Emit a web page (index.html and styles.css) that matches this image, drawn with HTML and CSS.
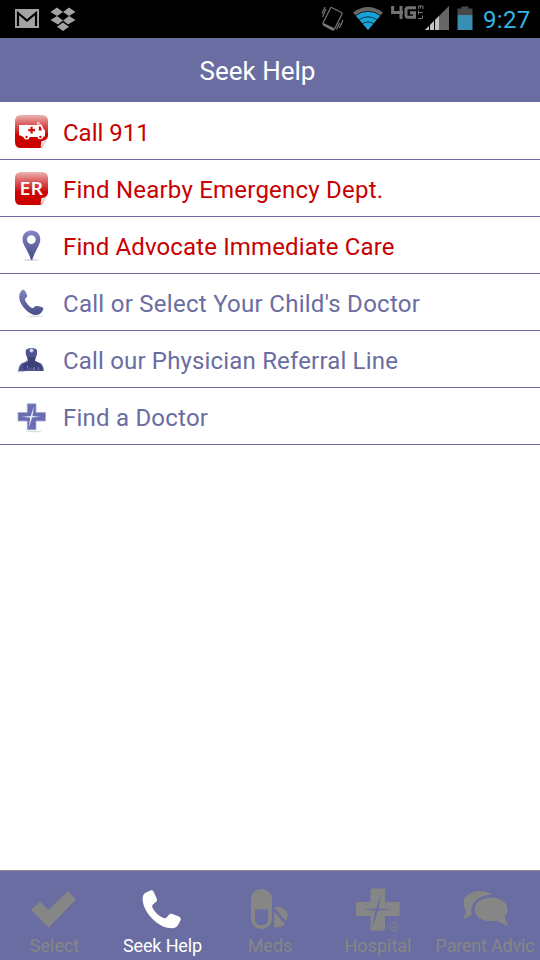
FILE: index.html
```
<!DOCTYPE html>
<html lang="en">
<head>
<meta charset="utf-8">
<title>Seek Help</title>
<link rel="stylesheet" href="styles.css">
</head>
<body>
<div class="screen">
  <div class="status">
    <svg class="notifications" width="80" height="38" viewBox="0 0 80 38">
      <path fill="#a3a3a3" d="M15 9h24v19H15z"/>
      <path fill="none" stroke="#000" stroke-width="2.2" d="M18 26V13L27 20.500L36 13V26"/>
      <g fill="#a3a3a3">
        <path d="M57 7.500l6 4.500-6 4-6.500-4zM69 7.500l6.500 4.500-6.500 4-6-4zM57 16l6 4.500-5 4-7.500-4.500zM69 16l6.500 4-7.500 4.500-5-4zM63 22.500l6 4.200-6 4.300-6-4.300z"/>
      </g>
    </svg>
    <svg class="signals" width="160" height="38" viewBox="320 0 160 38">
      <g fill="none" stroke="#777" stroke-width="1.200">
        <path d="M331.500 7.500l10 5q1 .5.500 1.500l-7.500 15q-.5 1-1.500.5l-9.500-5q-1-.5-.5-1.500l7.500-15q.3-.8 1-.5z"/>
        <path d="M322 13.500l3-6.500M322.500 17l3.500-8M339.500 28l3.500-8M336.500 29.500l3-6.500"/>
      </g>
      <path fill="#777" d="M323.500 23l10.500 5-1 3-10-5.500z"/>
      <path fill="#666" d="M353 12.500Q368 1.500 383 12.500L368 30z"/>
      <path fill="#16a5db" d="M356 15.700Q368 7.500 380 15.700L368 30z"/>
      <path fill="none" stroke="#000" stroke-opacity=".7" stroke-width="1" d="M355.500 15.500Q368 7 380.500 15.500M359 19.800Q368 13.800 377 19.800M362.300 23.700Q368 20.300 373.700 23.700"/>
      <path fill="none" stroke="#737373" stroke-width="3" d="M392.600 6v6.500H403M401 6v13M416 7.800h-8q-2 0-2 2v5.500q0 2 2 2h6.500v-4.500h-4.500"/>
      <path fill="none" stroke="#737373" stroke-width="1" d="M418 18.500h4.500v-3M418.500 14.500v-4M418.500 12.500h4.500M418.500 9v-3h4.500v3M420.500 6v2.500"/>
      <path fill="#666" d="M449 6v24h-24z"/>
      <path fill="#c3c3c3" d="M439 16v14h-14z"/>
      <path stroke="#000" stroke-width="1" d="M429.500 24v6M434.500 19v11"/>
      <path fill="#484848" d="M457.500 8.500h4V6.500h7v2h4V15h-15z"/>
      <path fill="#388fb2" d="M457.500 15h15v15h-15z"/>
    </svg>
    <span class="clock">9:27</span>
  </div>
  <header class="title"><h1>Seek Help</h1></header>
  <ul class="list">
    <li class="row urgent">
      <svg width="40" height="40" viewBox="12 112 40 40">
        <defs>
          <linearGradient id="red" x1="0" y1="0" x2="0" y2="1">
            <stop offset="0" stop-color="#edb5b5"/><stop offset=".25" stop-color="#dc6565"/><stop offset=".5" stop-color="#d02525"/><stop offset=".6" stop-color="#cd0303"/><stop offset="1" stop-color="#c90000"/>
          </linearGradient>
        </defs>
        <path fill="url(#red)" d="M21 115h21q6 0 6 6v15q-1 5-7 12H21q-6 0-6-6v-21q0-6 6-6z"/>
        <path fill="#e9e1e1" d="M48 137q-1 5.500-7.500 10.500l1-6.500q4 0 6.500-4z"/>
        <path fill="#fff" d="M19 125h18v-.5h4.500l2 4.500 1.500 1.500v6h-1.500a3.200 3.200 0 0 1-6.200.5h-7.500a3.200 3.200 0 0 1-6.300 0L19 135z"/>
        <path fill="#d20c0c" d="M30.500 126.800h2.200v2.300h2.300v2.100h-2.300v2.300h-2.200v-2.300h-2.300v-2.100h2.300zM38.800 126.500h1.700l1.500 4h-3.200z"/>
        <circle cx="26.500" cy="137" r="1.200" fill="#d20c0c"/><circle cx="40.400" cy="137" r="1.200" fill="#d20c0c"/>
        <path stroke="#fff" stroke-width="1.300" d="M37 123h2.500"/>
      </svg>
      <span class="t1">Call 911</span>
    </li>
    <li class="row urgent">
      <svg width="40" height="40" viewBox="12 112 40 40">
        <path fill="url(#red)" d="M21 115h21q6 0 6 6v15q-1 5-7 12H21q-6 0-6-6v-21q0-6 6-6z"/>
        <text class="er" x="19.500" y="137.800" textLength="23.500" lengthAdjust="spacingAndGlyphs">ER</text>
        <path fill="#e9e1e1" d="M48 137q-1 5.500-7.500 10.500l1-6.500q4 0 6.500-4z"/>
      </svg>
      <span class="t2">Find Nearby Emergency Dept.</span>
    </li>
    <li class="row urgent">
      <svg width="40" height="40" viewBox="12 226 40 40">
        <defs><linearGradient id="blue" x1="0" y1="0" x2="0" y2="1"><stop offset="0" stop-color="#8085c3"/><stop offset="1" stop-color="#484d84"/></linearGradient></defs>
        <ellipse cx="31" cy="260" rx="8" ry="1" fill="#ddd"/>
        <path fill="url(#blue)" fill-rule="evenodd" d="M31.300 230.500c5.500 0 9 3.800 9 8.800 0 6-5.500 12-8 20.500h-1.500c-2-8.500-8.300-14.500-8.300-20.500 0-5 3.500-8.800 8.800-8.800zm0 4.700a4.400 4.400 0 1 0 0 8.800 4.400 4.400 0 0 0 0-8.800z"/>
      </svg>
      <span class="t3">Find Advocate Immediate Care</span>
    </li>
    <li class="row">
      <svg width="40" height="40" viewBox="12 283 40 40">
        <ellipse cx="35" cy="316.300" rx="9" ry=".8" fill="#ddd"/>
        <path fill="url(#blue)" d="M22 290.200c1-.8 2-.5 2.800.5 1.500 2 2.700 4.500 2.200 6-.3 1-2 1.200-2 2.500 0 2.500 5 8.500 7.500 8.800 1.500.2 2-2 3.500-2 2 0 5.500.5 7 1.800.8.700.2 2-.7 3.400-1.800 3-4.300 3.800-7.300 3.700-5.500-.2-14.500-9-15.700-16.200-.5-4 .7-7 2.700-8.500z"/>
      </svg>
      <span class="t4">Call or Select Your Child's Doctor</span>
    </li>
    <li class="row">
      <svg width="40" height="40" viewBox="12 340 40 40">
        <path fill="#c8c8cf" d="M17 372.300l2.500-6.800 5-3 3-3.500 3 11-8 2.300z"/>
        <path fill="#4d5490" d="M25.800 350.500q.7-2.500 5.700-2.500t5.500 2.500v4l-1.300 3.500-.7 3 5.500 2.200q3 2.300 3.300 7.800H18.500q.5-5.500 3.300-7.800l6-2.200-.5-3-1.500-3.500z"/>
        <path fill="#3b427b" d="M28 357h7v4l5 2.500 2 6-4 1-6.500-3-6.500 2.500-3-3 2-3 4-2z"/>
        <circle cx="31.500" cy="350.500" r="1.800" fill="#e3e4f2" stroke="#a1a4c4" stroke-width=".8"/>
        <path fill="none" stroke="#8f95c3" stroke-width=".8" d="M27.500 366v2.500M34 370v-3M38.500 370v-3"/>
      </svg>
      <span class="t5">Call our Physician Referral Line</span>
    </li>
    <li class="row">
      <svg width="40" height="40" viewBox="12 397 40 40">
        <ellipse cx="34" cy="431.500" rx="8" ry=".7" fill="#ddd"/>
        <path fill="#696eb3" stroke="#a4a7d1" stroke-width=".8" d="M27.300 403.800h8.700v8.700h9.500v8.500H36v8.700h-8.700V421h-9.300v-8.500h9.300z"/>
        <path fill="#e6e6f6" d="M34 406l-1.500 10 7.500.7-7.800.8-3.700 11 1.700-10.800-8.500-1 9-.8z"/>
      </svg>
      <span class="t6">Find a Doctor</span>
    </li>
  </ul>
  <nav class="tabs">
    <div class="tab">
      <svg width="108" height="64" viewBox="0 871 108 64"><path fill="currentColor" d="M31 910l9-8.300 8.300 8.300L68 891l8 8.500-27.500 28z"/></svg>
      <span class="l1">Select</span>
    </div>
    <div class="tab active">
      <svg width="108" height="64" viewBox="108 871 108 64"><path fill="currentColor" d="M146 892.500l4.500-2c1.500-.5 2.500 0 3.200 1.500l3 6.500c.6 1.500.3 2.500-.8 3.500l-3 2.500c-1 1-.8 2.500 0 4 2.500 4.500 6 7.500 10.500 9.500 1.500.6 2.500.2 3.500-.8l2-2.500c1-1 2-1.200 3.500-.7l6.500 2.500c1.500.7 2.300 2 1.700 3.500l-2 4c-1.500 3-3.500 4.200-7 4.300-13 .2-29-16-29-29.500 0-3 1-5 3.400-6.300z"/></svg>
      <span class="l2">Seek Help</span>
    </div>
    <div class="tab">
      <svg width="108" height="64" viewBox="216 871 108 64">
        <path fill="currentColor" fill-rule="evenodd" d="M261.500 889c6 0 10.500 4.500 10.500 10.500v19c0 6-4.500 10.500-10.500 10.500S251 924.500 251 918.500v-19c0-6 4.500-10.500 10.500-10.500zm-6.500 20.500v9.500q0 6.500 6.500 6.500t6.500-6.500v-9.500z"/>
        <path fill="currentColor" d="M274.300 907.500q4-1.700 8.500.5 7.500 5 3.500 13.500zM274 911.500l11 12.500q-4 4-9.500 3.200l-1.500-.4z"/>
      </svg>
      <span class="l3">Meds</span>
    </div>
    <div class="tab">
      <svg width="108" height="64" viewBox="324 871 108 64">
        <path fill="currentColor" d="M370.500 888.500h14.500V902h14.500v14H385v14.500h-14.500V916H356v-14h14.500z"/>
        <path fill="#6a6da1" d="M381.500 893.500l-3 15 14 .9-14.500 1-6.500 19.600 3.800-19.400-12.800-1.200 13.600-1z"/>
        <circle cx="394" cy="926.500" r="4.200" fill="none" stroke="currentColor" stroke-width=".9"/>
        <text class="reg" x="394" y="929">R</text>
      </svg>
      <span class="l4">Hospital</span>
    </div>
    <div class="tab">
      <svg width="108" height="64" viewBox="432 871 108 64">
        <path fill="currentColor" d="M492 894.800c-3-2.300-7-3.800-12-3.800-9.500 0-16.500 5.200-16.500 12 0 3 1 5.500 2.500 7.500l-2.500 8.500 8.500-4.500c-3.500-10 6-19.500 20-19.700z"/>
        <path fill="currentColor" d="M491 897.500c9.500 0 16.500 5.300 16.500 12 0 3-1 5.500-3 7.500l3.500 9-12-5.500-5 .7c-9.500 0-16.500-5-16.500-11.700s7-12 16.500-12z"/>
      </svg>
      <span class="l5">Parent Advic</span>
    </div>
  </nav>
</div>
</body>
</html>
```
FILE: styles.css
```
* { box-sizing: border-box; }
body { margin: 0; font-family: Roboto, "Liberation Sans", sans-serif; background: #fff; }
svg { display: block; flex: none; }
.screen { width: 540px; height: 960px; display: flex; flex-direction: column; overflow: hidden; }
.status { height: 38px; background: #000; display: flex; flex: none; }
.signals { margin-left: auto; }
.clock { width: 60px; padding-left: 3px; font-size: 24px; line-height: 40px; letter-spacing: .3px; color: #33b5e5; white-space: nowrap; }
.title { height: 64px; flex: none; background: #6a6da1; text-align: center; padding-right: 25px; }
.title h1 { margin: 0; font-size: 26px; font-weight: 400; line-height: 66px; color: #fff; }
.list { list-style: none; margin: 0; padding: 1px 0 0; flex: 1; }
.row { height: 57px; border-bottom: 1px solid #6a6da1; display: flex; align-items: center; padding: 2px 0 0 12px; color: #6a6da1; font-size: 24px; white-space: nowrap; }
.row svg { margin-right: 11px; }
.row span { padding-top: 2px; }
.t2, .t6 { letter-spacing: .22px; }
.t3 { letter-spacing: .13px; }
.t4 { letter-spacing: .28px; }
.t5 { letter-spacing: .17px; }
.urgent { color: #c80000; }
.er { font: 600 18px "Open Sans", sans-serif; fill: #fff; }
.tabs { height: 90px; flex: none; display: flex; background: #6a6da1; border-top: 1px solid #8b8b8b; }
.tab { width: 108px; color: #868686; font-size: 18px; line-height: 22px; text-align: center; white-space: nowrap; overflow: hidden; }
.tab span { display: block; }
.l1 { padding-left: 1px; }
.l2 { letter-spacing: -.15px; padding-left: 1px; }
.l5 { letter-spacing: -.2px; padding-right: 2px; }
.active { color: #fff; }
.reg { font-size: 6px; text-anchor: middle; fill: currentColor; }
```
